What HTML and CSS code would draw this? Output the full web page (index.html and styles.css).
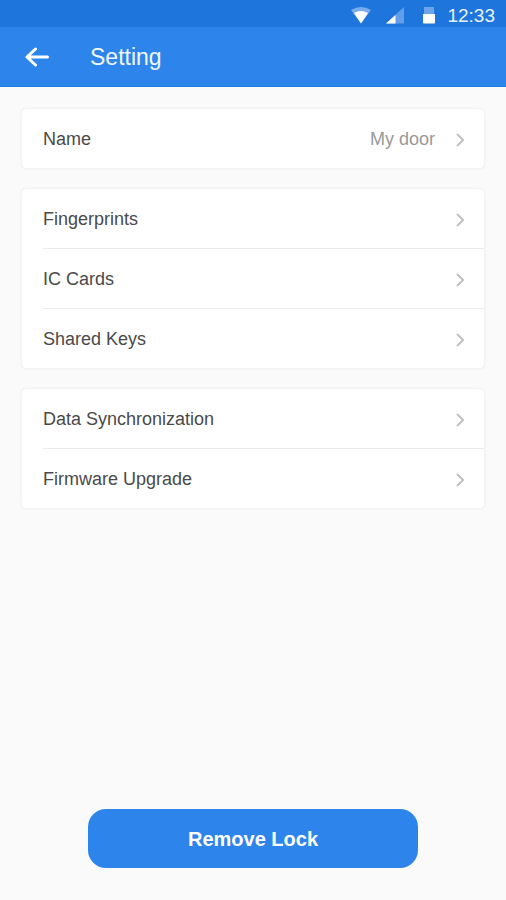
FILE: index.html
```html
<!DOCTYPE html>
<html lang="en">
<head>
<meta charset="utf-8">
<meta name="viewport" content="width=device-width, initial-scale=1">
<title>Setting</title>
<link rel="stylesheet" href="styles.css">
</head>
<body>
<svg class="sprite" aria-hidden="true">
  <symbol id="chevron" viewBox="0 0 8 14"><path d="M1 1 7 7 1 13"/></symbol>
</svg>
<div class="status">
  <svg class="wifi" width="20" height="18" viewBox="0 0 20 18" aria-hidden="true"><path opacity=".4" d="M0 3Q10-3 20 3L10 16.500Z"/><path d="M3 6Q10 2 17 6L10 16.500Z"/></svg>
  <svg class="signal" width="18" height="18" viewBox="0 0 18 18" aria-hidden="true"><path opacity=".3" d="M18 0V16.500H0Z"/><path d="M9.500 8V16.500H0Z"/></svg>
  <svg class="battery" width="12" height="18" viewBox="0 0 12 18" aria-hidden="true"><path opacity=".35" d="M1 0H11V7H1Z"/><path d="M0 7H12V15.500Q12 16.500 11 16.500H1Q0 16.500 0 15.500Z"/></svg>
  <span class="time">12:33</span>
</div>
<header class="bar">
  <button class="back" type="button" aria-label="Back"><svg width="24" height="20" viewBox="0 0 24 20" aria-hidden="true"><path d="M10.500 2 2 10 10.500 18M2 10H22.500"/></svg></button>
  <h1 class="title">Setting</h1>
</header>
<main class="content">
  <nav class="card">
    <a class="row" href="#name"><span class="label">Name</span><span class="value">My door</span><svg class="chevron"><use href="#chevron"/></svg></a>
  </nav>
  <nav class="card">
    <a class="row" href="#fingerprints"><span class="label">Fingerprints</span><svg class="chevron"><use href="#chevron"/></svg></a>
    <a class="row" href="#cards"><span class="label">IC Cards</span><svg class="chevron"><use href="#chevron"/></svg></a>
    <a class="row" href="#keys"><span class="label">Shared Keys</span><svg class="chevron"><use href="#chevron"/></svg></a>
  </nav>
  <nav class="card">
    <a class="row" href="#sync"><span class="label">Data Synchronization</span><svg class="chevron"><use href="#chevron"/></svg></a>
    <a class="row" href="#firmware"><span class="label">Firmware Upgrade</span><svg class="chevron"><use href="#chevron"/></svg></a>
  </nav>
  <button class="remove" type="button">Remove Lock</button>
</main>
</body>
</html>
```
FILE: styles.css
```css
* { box-sizing: border-box; }
body {
  margin: 0;
  min-height: 100vh;
  display: flex;
  flex-direction: column;
  background: #fafafa;
  color: #4a4a4a;
  font-family: "Liberation Sans", Arial, sans-serif;
  font-size: 18px;
}
.sprite { position: absolute; width: 0; height: 0; }
.status {
  display: flex;
  justify-content: flex-end;
  align-items: center;
  height: 27px;
  padding: 4px 11px 0 0;
  background: #1e76dc;
  color: #e8f2ff;
}
.status svg { fill: #fff; }
.wifi { margin-right: 15px; }
.signal { margin-right: 19px; }
.battery { margin-right: 12px; }
.time { font-size: 19px; line-height: 20px; }
.bar {
  display: flex;
  align-items: center;
  height: 60px;
  padding: 1px 25px 0;
  background: #2d84ea;
  border-bottom: 1px solid #1c7ae4;
}
.back {
  display: flex;
  padding: 0;
  margin-right: 41px;
  border: 0;
  background: none;
}
.back svg {
  fill: none;
  stroke: #fff;
  stroke-width: 3;
  stroke-linecap: round;
  stroke-linejoin: round;
}
.title {
  margin: 0;
  color: #f0f7ff;
  font-size: 23px;
  font-weight: 400;
  line-height: 28px;
}
.content {
  flex: 1;
  display: flex;
  flex-direction: column;
  gap: 19px;
  padding: 21px 21px 32px;
}
.card {
  padding-left: 21px;
  background: #fff;
  border: 1px solid #f2f3f3;
  border-radius: 5px;
  box-shadow: 0 0 2px #eceded;
}
.row {
  display: flex;
  align-items: center;
  height: 59px;
  padding: 2px 20px 0 0;
  color: inherit;
  text-decoration: none;
}
.row + .row {
  height: 60px;
  border-top: 1px solid #ebebeb;
}
.label { flex: 1; }
.value { margin-right: 21px; color: #999; }
.chevron {
  width: 8px;
  height: 14px;
  fill: none;
  stroke: #c0c0c0;
  stroke-width: 2;
}
.remove {
  width: 71%;
  height: 59px;
  margin: auto auto 0;
  border: 0;
  border-radius: 18px;
  background: #2d84ea;
  color: #fff;
  font: bold 20px/24px "Liberation Sans", Arial, sans-serif;
}
```
